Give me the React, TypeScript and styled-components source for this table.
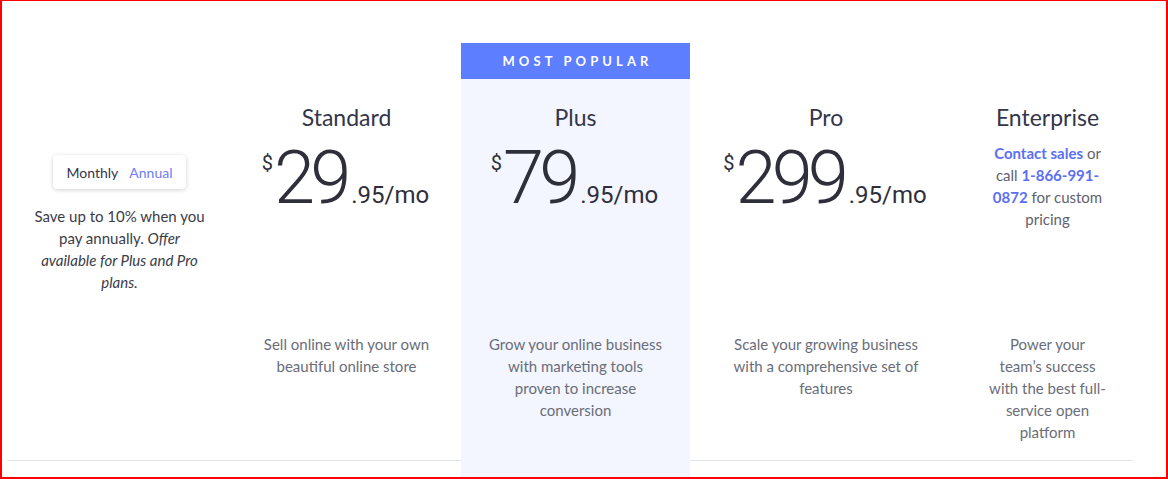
import styled, { createGlobalStyle } from 'styled-components'

const GlobalStyle = createGlobalStyle`
  body {
    margin: 0;
    font-family: Lato, "Open Sans", sans-serif;
    color: #2f3140;
  }
`

const Frame = styled.div`
  width: 1168px;
  height: 479px;
  box-sizing: border-box;
  border: 2px solid #ff0000;
  border-top-width: 1px;
  overflow: hidden;
  padding: 42px 0 0 5px;
  background: #fff;
`

const Table = styled.div`
  display: grid;
  grid-template-columns: 225px 229px 229px 272px 171px;
  align-items: start;
`

const Column = styled.div<{ $featured?: boolean }>`
  box-sizing: border-box;
  height: ${(p) => (p.$featured ? '440px' : '418px')};
  display: flex;
  flex-direction: column;
  align-items: center;
  text-align: center;
  background: ${(p) => (p.$featured ? '#f3f6ff' : 'transparent')};
  border-bottom: ${(p) => (p.$featured ? 'none' : '1px solid #e4e5ec')};
`

const Banner = styled.div<{ $show?: boolean }>`
  align-self: stretch;
  height: 36px;
  display: flex;
  align-items: center;
  justify-content: center;
  background: ${(p) => (p.$show ? '#5d7efe' : 'transparent')};
  color: #fff;
  font-size: 13px;
  font-weight: 700;
  letter-spacing: 4.1px;
  padding-left: 4px;
`

const Body = styled.div`
  display: flex;
  flex-direction: column;
  align-items: center;
  padding: 0 24px;
`

const PlanName = styled.div`
  margin-top: 23px;
  font-size: 23px;
  line-height: 30px;
  color: #33354a;
`

const Summary = styled.div`
  height: 201px;
  display: flex;
  flex-direction: column;
  align-items: center;
`

const Price = styled.div`
  display: flex;
  align-items: baseline;
  margin-top: 9px;
  margin-left: -2px;
  font-family: Roboto, "Liberation Sans", sans-serif;
  color: #2e2f3b;
`

const Currency = styled.span`
  align-self: flex-start;
  margin-top: 12px;
  margin-right: 1px;
  font-size: 20px;
  line-height: 1;
`

const Whole = styled.span`
  font-size: 74px;
  font-weight: 300;
  line-height: 1;
  letter-spacing: -5px;
  margin-right: 5px;
`

const Cents = styled.span`
  font-size: 24px;
  font-weight: 400;
  line-height: 1;
`

const Contact = styled.p`
  margin: 10px 0 0;
  font-size: 15px;
  line-height: 22px;
  color: #5f6270;
`

const Strong = styled.a`
  color: #5b6ff4;
  font-weight: 700;
  text-decoration: none;
`

const Description = styled.p`
  margin: 0;
  font-size: 15px;
  line-height: 22px;
  color: #6a6d79;
`

const Aside = styled.div`
  padding: 112px 24px 0;
  display: flex;
  flex-direction: column;
  align-items: center;
`

const Toggle = styled.div`
  display: flex;
  align-items: center;
  gap: 11px;
  height: 34px;
  padding: 0 14px;
  box-sizing: border-box;
  background: #fff;
  border-radius: 4px;
  box-shadow: 0 1px 4px rgba(40, 44, 70, 0.22);
  font-size: 14px;
`

const ToggleOption = styled.span<{ $active?: boolean }>`
  color: ${(p) => (p.$active ? '#333647' : '#6f7dfa')};
`

const Note = styled.p`
  margin: 16px 0 0;
  font-size: 15px;
  line-height: 22px;
  color: #3a3c48;
`

type Plan = {
  name: string
  whole: string
  cents: string
  lines: string[]
  featured?: boolean
}

const plans: Plan[] = [
  { name: 'Standard', whole: '29', cents: '.95/mo', lines: ['Sell online with your own', 'beautiful online store'] },
  {
    name: 'Plus',
    whole: '79',
    cents: '.95/mo',
    featured: true,
    lines: ['Grow your online business', 'with marketing tools', 'proven to increase', 'conversion'],
  },
  {
    name: 'Pro',
    whole: '299',
    cents: '.95/mo',
    lines: ['Scale your growing business', 'with a comprehensive set of', 'features'],
  },
]

function Lines({ lines }: { lines: string[] }) {
  return (
    <Description>
      {lines.map((l, i) => (
        <span key={i}>
          {l}
          {i < lines.length - 1 && <br />}
        </span>
      ))}
    </Description>
  )
}

export default function App() {
  return (
    <>
      <GlobalStyle />
      <Frame>
        <Table>
          <Column>
            <Aside>
              <Toggle>
                <ToggleOption $active>Monthly</ToggleOption>
                <ToggleOption>Annual</ToggleOption>
              </Toggle>
              <Note>
                Save up to 10% when you
                <br />
                pay annually. <em>Offer</em>
                <br />
                <em>available for Plus and Pro</em>
                <br />
                <em>plans.</em>
              </Note>
            </Aside>
          </Column>
          {plans.map((plan) => (
            <Column key={plan.name} $featured={plan.featured}>
              <Banner $show={plan.featured}>{plan.featured ? 'MOST POPULAR' : ''}</Banner>
              <Body>
                <PlanName>{plan.name}</PlanName>
                <Summary>
                  <Price>
                    <Currency>$</Currency>
                    <Whole>{plan.whole}</Whole>
                    <Cents>{plan.cents}</Cents>
                  </Price>
                </Summary>
                <Lines lines={plan.lines} />
              </Body>
            </Column>
          ))}
          <Column>
            <Banner />
            <Body>
              <PlanName>Enterprise</PlanName>
              <Summary>
                <Contact>
                  <Strong href="#">Contact sales</Strong> or
                  <br />
                  call <Strong href="#">1-866-991-</Strong>
                  <br />
                  <Strong href="#">0872</Strong> for custom
                  <br />
                  pricing
                </Contact>
              </Summary>
              <Lines lines={['Power your', 'team’s success', 'with the best full-', 'service open', 'platform']} />
            </Body>
          </Column>
        </Table>
      </Frame>
    </>
  )
}
